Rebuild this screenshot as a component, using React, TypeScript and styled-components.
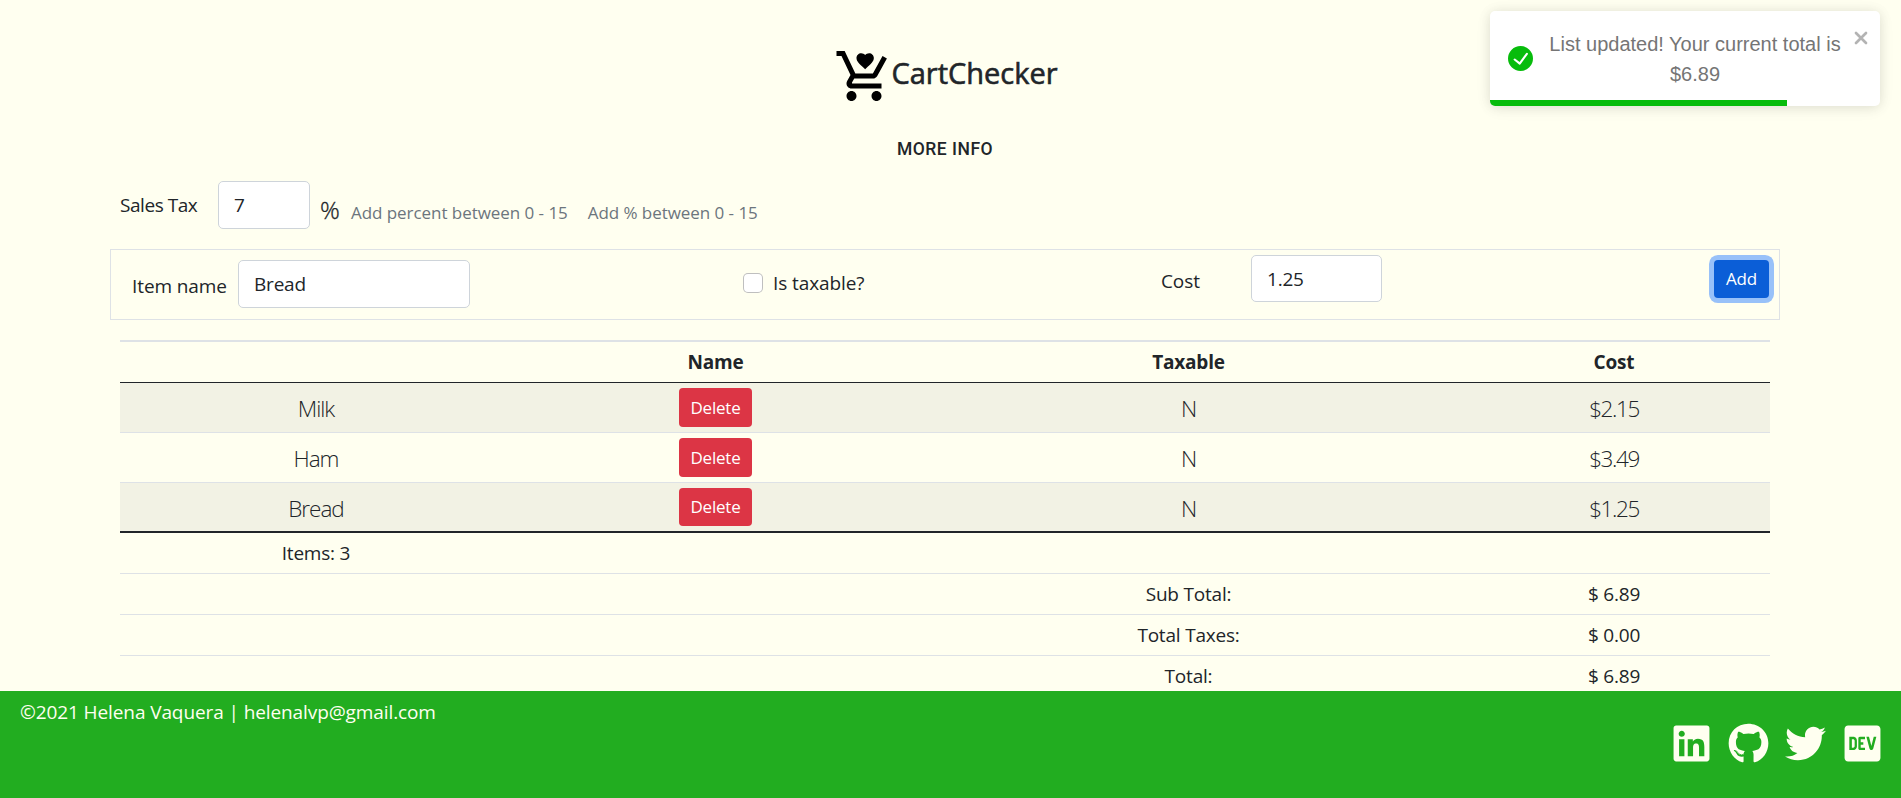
import React from "react";
import styled, { createGlobalStyle } from "styled-components";
import { FaLinkedin, FaGithub, FaTwitter, FaDev } from "react-icons/fa";

const GlobalStyle = createGlobalStyle`
  *, *::before, *::after { box-sizing: border-box; }
  body {
    margin: 0;
    background: #fffff0;
    color: #212529;
    font-family: "Open Sans", "Noto Sans", sans-serif;
    font-size: 19px;
    line-height: 30px;
    letter-spacing: -0.2px;
    overflow: hidden;
  }
  input, button { font: inherit; letter-spacing: inherit; color: inherit; }
`;

const Page = styled.div`
  height: 798px;
  display: flex;
  flex-direction: column;
  overflow: hidden;
`;

const Main = styled.main`
  width: 1670px;
  height: 691px;
  flex: none;
  margin-left: 110px;
  overflow: hidden;
`;

const Brand = styled.header`
  display: flex;
  justify-content: center;
  padding: 46px 0 0 2px;
`;

const Title = styled.h1`
  margin: 0 0 0 -3px;
  font-size: 29px;
  font-weight: 400;
  -webkit-text-stroke: 0.6px currentColor;
  line-height: 54px;
  letter-spacing: 0;
`;

const MoreInfo = styled.button`
  display: block;
  margin: 28px auto 17px;
  padding: 0;
  border: 0;
  background: none;
  font-family: Roboto, sans-serif;
  font-size: 17.5px;
  font-weight: 500;
  line-height: 30px;
  letter-spacing: 0.5px;
`;

const Input = styled.input<{ $w: number; $h?: number }>`
  width: ${(p) => p.$w}px;
  height: ${(p) => p.$h ?? 48}px;
  padding: 0 15px;
  border: 1px solid #ced4da;
  border-radius: 5px;
  background: #fff;
  outline: none;
`;

const TaxRow = styled.div`
  display: flex;
  align-items: flex-start;
  height: 68px;
  padding-left: 10px;
`;

const TaxLabel = styled.label`
  width: 98px;
  padding-top: 9px;
  letter-spacing: -0.45px;
`;

const Percent = styled.span`
  width: 31px;
  margin-left: 10px;
  padding-top: 14px;
  font-size: 24.5px;
  font-weight: 300;
  -webkit-text-stroke: 0.3px currentColor;
`;

const Hint = styled.span`
  padding-top: 17px;
  margin-right: 20px;
  font-size: 17px;
  letter-spacing: -0.05px;
  color: #6c757d;
`;

const ItemForm = styled.form`
  display: flex;
  align-items: flex-start;
  height: 71px;
  border: 1px solid #dee2e6;
`;

const Field = styled.div<{ $w: number; $top: number }>`
  display: flex;
  align-items: flex-start;
  width: ${(p) => p.$w}px;
  padding-top: ${(p) => p.$top}px;
`;

const FieldLabel = styled.label<{ $w: number; $top: number; $indent?: number }>`
  width: ${(p) => p.$w}px;
  padding-top: ${(p) => p.$top}px;
  padding-left: ${(p) => p.$indent ?? 0}px;
  letter-spacing: -0.1px;
`;

const Checkbox = styled.input`
  appearance: none;
  width: 20px;
  height: 20px;
  margin: 0 10px 0 0;
  border: 1px solid rgba(0, 0, 0, 0.25);
  border-radius: 5px;
  background: #fff;
`;

const CheckLabel = styled.label`
  margin-top: -5px;
  letter-spacing: -0.1px;
`;

const Button = styled.button<{ $w: number; $h?: number; $bg: string; $ring?: boolean }>`
  display: block;
  width: ${(p) => p.$w}px;
  height: ${(p) => p.$h ?? 39}px;
  padding: 0;
  border: 0;
  border-radius: 4px;
  background: ${(p) => p.$bg};
  color: #fff;
  font-size: 17px;
  line-height: 36px;
  text-align: center;
  box-shadow: ${(p) => (p.$ring ? "0 0 0 5px #98c1f9" : "none")};
`;

const Table = styled.table`
  width: 1650px;
  margin: 20px 0 0 10px;
  table-layout: fixed;
  border-spacing: 0;
  text-align: center;
`;

const HeadCell = styled.th`
  height: 43px;
  padding: 1px 0 0;
  vertical-align: top;
  border-top: 2px solid #dee2e6;
  border-bottom: 1px solid #212529;
  font-weight: 700;
  line-height: 39px;
`;

const ItemCell = styled.td<{ $striped: boolean; $last: boolean }>`
  height: 50px;
  padding: 4px 0 0;
  vertical-align: top;
  background: ${(p) => (p.$striped ? "#f2f2e4" : "transparent")};
  border-bottom: ${(p) => (p.$last ? "2px solid #212529" : "1px solid #dee2e6")};
  font-size: 22.5px;
  font-weight: 300;
  line-height: 44px;
  letter-spacing: -1px;
  ${Button} { margin: 1px auto 0; font-weight: 400; letter-spacing: -0.2px; }
`;

const CostCell = styled(ItemCell)`
  letter-spacing: -1.4px;
`;

const TotalCell = styled.td`
  height: 41px;
  padding: 1px 0 0;
  vertical-align: top;
  border-bottom: 1px solid #dee2e6;
  line-height: 39px;
`;

const Footer = styled.footer`
  display: flex;
  justify-content: space-between;
  flex: none;
  height: 107px;
  padding: 6px 18px 0 20px;
  background: #22ad20;
  color: #fffff0;
  letter-spacing: -0.1px;
`;

const Socials = styled.nav`
  display: flex;
  align-items: center;
  gap: 16px;
  height: 41px;
  margin-top: 26px;
  svg { display: block; flex: none; width: 41px; height: 41px; }
`;

const Toast = styled.aside`
  position: absolute;
  top: 11px;
  left: 1490px;
  width: 390px;
  height: 95px;
  display: flex;
  padding: 0 12px 0 18px;
  border-radius: 5px;
  background: #fff;
  box-shadow: 0 1px 12px rgba(0, 0, 0, 0.1), 0 2px 18px rgba(0, 0, 0, 0.05);
  color: #757575;
  font-family: "Liberation Sans", Arial, sans-serif;
  font-size: 20px;
  letter-spacing: 0;
  text-align: center;
`;

const ToastText = styled.div`
  flex: 1;
  padding: 18px 0 0 3px;
`;

const ToastCheck = styled.svg`
  width: 25px;
  height: 25px;
  margin-top: 35px;
`;

const ToastClose = styled.svg`
  width: 14px;
  height: 14px;
  margin-top: 20px;
`;

const Progress = styled.div`
  position: absolute;
  left: 0;
  bottom: 0;
  width: 297px;
  height: 6px;
  border-bottom-left-radius: 5px;
  background: #07bc0c;
`;

const CartLogo = () => (
  <svg width="60" height="60" viewBox="0 0 24 24" fill="#000">
    <path d="M7 18c-1.1 0-1.99.9-1.99 2S5.9 22 7 22s2-.9 2-2-.9-2-2-2zm10 0c-1.1 0-1.99.9-1.99 2s.89 2 1.99 2 2-.9 2-2-.9-2-2-2zm-9.83-3.25l.03-.12.9-1.63h7.45c.75 0 1.41-.41 1.75-1.03l3.86-7.01L19.42 4h-.01l-1.1 2-2.76 5H8.53l-.13-.27L6.16 6l-.95-2-.94-2H1v2h2l3.6 7.59-1.35 2.45c-.16.28-.25.61-.25.96 0 1.1.9 2 2 2h12v-2H7.42c-.13 0-.25-.11-.25-.25z" />
    <path
      transform="translate(8.3 1.85) scale(.347)"
      d="M12 21.35l-1.45-1.32C5.4 15.36 2 12.28 2 8.5 2 5.42 4.42 3 7.5 3c1.74 0 3.41.81 4.5 2.09C13.09 3.81 14.76 3 16.5 3 19.58 3 22 5.42 22 8.5c0 3.78-3.4 6.86-8.55 11.54L12 21.35z"
    />
  </svg>
);

const items = [
  { name: "Milk", taxable: "N", cost: "$2.15" },
  { name: "Ham", taxable: "N", cost: "$3.49" },
  { name: "Bread", taxable: "N", cost: "$1.25" },
];

const totals = [
  ["Items: 3", "", "", ""],
  ["", "", "Sub Total:", "$ 6.89"],
  ["", "", "Total Taxes:", "$ 0.00"],
  ["", "", "Total:", "$ 6.89"],
];

export default function App() {
  return (
    <Page>
      <GlobalStyle />
      <Main>
        <Brand>
          <CartLogo />
          <Title>CartChecker</Title>
        </Brand>
        <MoreInfo>MORE INFO</MoreInfo>
        <TaxRow>
          <TaxLabel>Sales Tax</TaxLabel>
          <Input $w={92} defaultValue="7" />
          <Percent>%</Percent>
          <Hint>Add percent between 0 - 15</Hint>
          <Hint>Add % between 0 - 15</Hint>
        </TaxRow>
        <ItemForm onSubmit={(e) => e.preventDefault()}>
          <Field $w={632} $top={10}>
            <FieldLabel $w={127} $top={11} $indent={21}>Item name</FieldLabel>
            <Input $w={232} defaultValue="Bread" />
          </Field>
          <Field $w={418} $top={23}>
            <Checkbox type="checkbox" />
            <CheckLabel>Is taxable?</CheckLabel>
          </Field>
          <Field $w={553} $top={5}>
            <FieldLabel $w={90} $top={11}>Cost</FieldLabel>
            <Input $w={131} $h={47} defaultValue="1.25" />
          </Field>
          <Field $w={55} $top={10}>
            <Button $w={55} $h={38} $bg="#0b5ed7" $ring>Add</Button>
          </Field>
        </ItemForm>
        <Table>
          <colgroup>
            <col width={392} />
            <col width={407} />
            <col width={539} />
            <col width={312} />
          </colgroup>
          <thead>
            <tr>
              <HeadCell />
              <HeadCell>Name</HeadCell>
              <HeadCell>Taxable</HeadCell>
              <HeadCell>Cost</HeadCell>
            </tr>
          </thead>
          <tbody>
            {items.map((item, i) => {
              const row = { $striped: i % 2 === 0, $last: i === items.length - 1 };
              return (
                <tr key={item.name}>
                  <ItemCell {...row}>{item.name}</ItemCell>
                  <ItemCell {...row}>
                    <Button $w={73} $h={row.$last ? 38 : 39} $bg="#dc3545">Delete</Button>
                  </ItemCell>
                  <ItemCell {...row}>{item.taxable}</ItemCell>
                  <CostCell {...row}>{item.cost}</CostCell>
                </tr>
              );
            })}
          </tbody>
          <tfoot>
            {totals.map((row, i) => (
              <tr key={i}>
                {row.map((cell, j) => (
                  <TotalCell key={j}>{cell}</TotalCell>
                ))}
              </tr>
            ))}
          </tfoot>
        </Table>
      </Main>
      <Footer>
        <span>©2021 Helena Vaquera | helenalvp@gmail.com</span>
        <Socials>
          <FaLinkedin />
          <FaGithub />
          <FaTwitter />
          <FaDev />
        </Socials>
      </Footer>
      <Toast>
        <ToastCheck viewBox="0 0 24 24">
          <path
            fill="#07bc0c"
            d="M12 0a12 12 0 1012 12A12.014 12.014 0 0012 0zm6.927 8.2l-6.845 9.289a1.011 1.011 0 01-1.43.188l-4.888-3.908a1 1 0 111.25-1.562l4.076 3.261 6.227-8.451a1 1 0 111.61 1.183z"
          />
        </ToastCheck>
        <ToastText>
          List updated! Your current total is
          <br />
          $6.89
        </ToastText>
        <ToastClose viewBox="0 0 14 14">
          <path d="M2 2l10 10M12 2L2 12" stroke="#b3b3b3" strokeWidth="2.7" strokeLinecap="round" />
        </ToastClose>
        <Progress />
      </Toast>
    </Page>
  );
}
